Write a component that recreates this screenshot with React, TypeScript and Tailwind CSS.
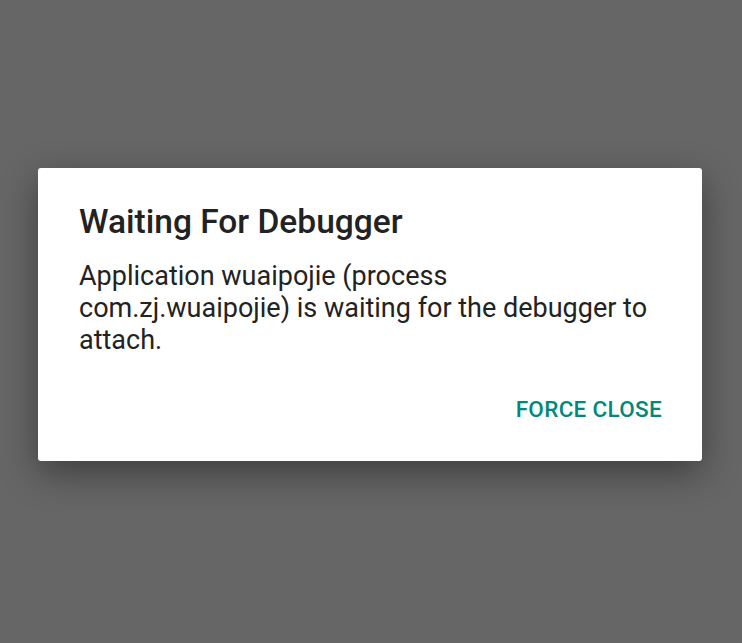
export default function App() {
  return (
    <div className="w-[742px] h-[643px] bg-[#666666] pt-[168px] pl-[38px] font-['Roboto',sans-serif]">
      <div className="w-[664px] h-[293px] bg-white rounded-[3px] shadow-[0_12px_36px_rgba(0,0,0,0.4)] flex flex-col pl-[41px] pr-[40px] pt-[34px]">
        <h1 className="text-[33.5px] leading-[40px] font-medium text-[#222222]">Waiting For Debugger</h1>
        <p className="mt-[18px] text-[27px] leading-[32px] text-[#222222] pr-[8px]">
          Application wuaipojie (process com.zj.wuaipojie) is waiting for the debugger to attach.
        </p>
        <div className="flex justify-end mt-[37px]">
          <button className="text-[22.5px] font-medium text-[#00897b] tracking-[0.3px]">FORCE CLOSE</button>
        </div>
      </div>
    </div>
  );
}
